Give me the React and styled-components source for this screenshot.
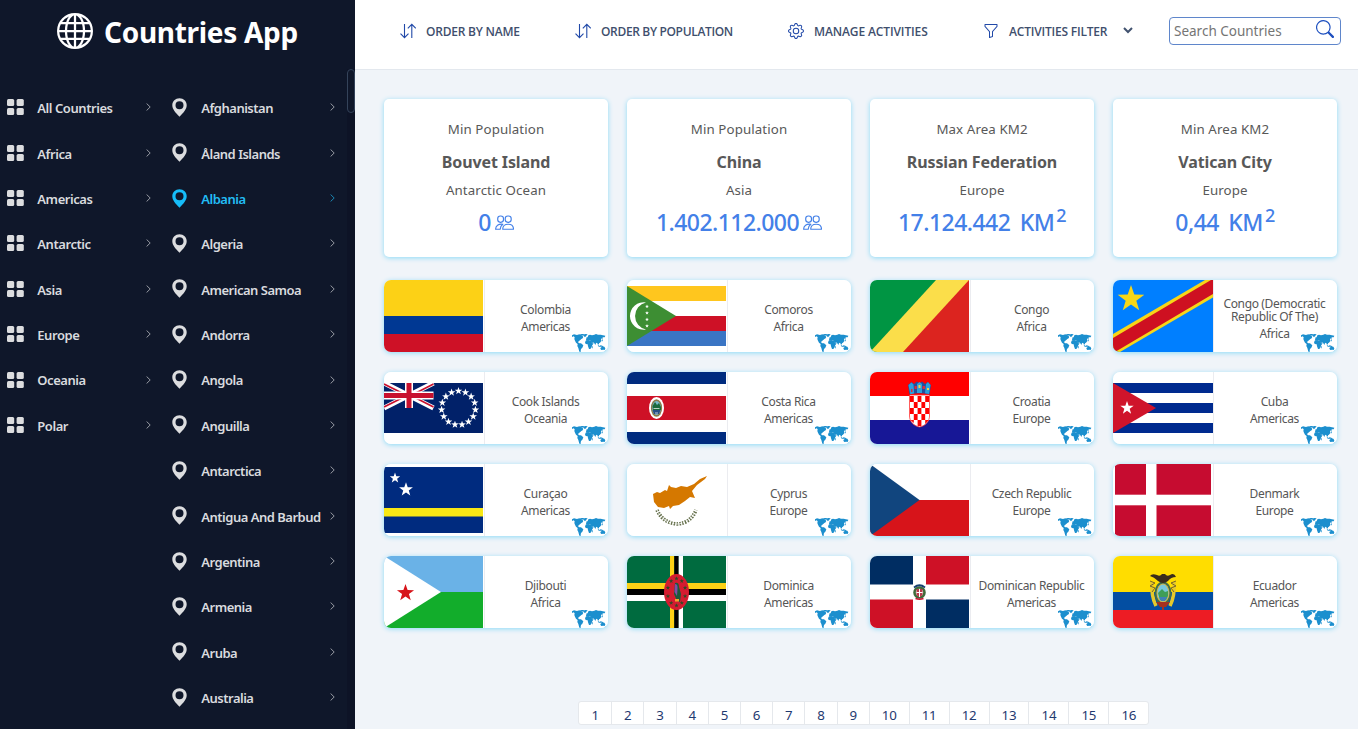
import React from "react";
import styled, { createGlobalStyle } from "styled-components";
import { BsGlobe, BsGear, BsFunnel, BsSearch } from "react-icons/bs";

const GlobalStyle = createGlobalStyle`
  *, *::before, *::after { box-sizing: border-box; }
  body {
    margin: 0;
    overflow: hidden;
    background: #f0f4f9;
    font-family: "Noto Sans", "Open Sans", sans-serif;
  }
  svg { display: block; flex: none; }
`;

const Page = styled.div`
  display: flex;
  width: 100%;
  height: 729px;
  overflow: hidden;
`;

/* ---------- sidebar ---------- */

const Sidebar = styled.aside`
  display: flex;
  flex-direction: column;
  flex: none;
  width: 355px;
  background: #0f172a;
  color: #d9dbdf;
`;

const Brand = styled.div`
  display: flex;
  align-items: center;
  height: 69px;
  padding: 0 0 7px 57px;
  gap: 11px;
  color: #fff;
`;

const BrandName = styled.h1`
  margin: 2px 0 0;
  font-size: 28px;
  line-height: 36px;
  font-weight: 700;
  letter-spacing: -0.3px;
  white-space: nowrap;
`;

const SidebarBody = styled.div`
  display: flex;
  flex: 1;
  min-height: 0;
  overflow: hidden;
`;

const NavList = styled.ul`
  flex: none;
  list-style: none;
  width: ${(p) => p.$width}px;
  margin: 0 ${(p) => p.$after}px 0 0;
  padding: 15.6px 0 0 ${(p) => p.$inset}px;
  letter-spacing: ${(p) => p.$tracking}px;
`;

const NavItem = styled.li`
  display: flex;
  align-items: center;
  height: 45.38px;
  color: ${(p) => (p.$active ? "#22bdf5" : "inherit")};
`;

const NavIcon = styled.span`
  display: flex;
  width: ${(p) => p.$slot}px;
  flex: none;
  color: ${(p) => (p.$active ? "#16bdf9" : "#dcdddf")};
`;

const NavText = styled.span`
  flex: 1;
  padding: 1.8px 0 0 0.3px;
  font-size: 13px;
  line-height: 18px;
  font-weight: 600;
  white-space: nowrap;
`;

const ScrollTrack = styled.div`
  width: 8px;
  background: #0d1326;
`;

const ScrollThumb = styled.div`
  height: 44px;
  border: 1px solid #34435a;
  border-radius: 4px;
  background: #0f172a;
`;

/* ---------- top bar ---------- */

const Main = styled.main`
  flex: 1;
  min-width: 0;
`;

const TopBar = styled.header`
  display: flex;
  align-items: center;
  height: 70px;
  padding: 0 17px 8px 45px;
  background: #fff;
  border-bottom: 1px solid #e3e8ee;
`;

const MenuButton = styled.button`
  display: flex;
  align-items: center;
  flex: none;
  width: ${(p) => p.$width}px;
  gap: 10px;
  padding: 0;
  border: 0;
  background: none;
  color: #2149a8;
`;

const MenuLabel = styled.span`
  padding-top: 2px;
  font-family: "Open Sans", sans-serif;
  font-size: 12px;
  line-height: 18px;
  font-weight: 600;
  letter-spacing: ${(p) => p.$tracking}px;
  white-space: nowrap;
  color: #3f4f6d;
`;

const Caret = styled.span`
  display: flex;
  margin-left: 6px;
  color: #41526f;
`;

const SearchBox = styled.label`
  display: flex;
  align-items: center;
  justify-content: space-between;
  width: 172px;
  height: 28px;
  padding: 0 6px 0 4px;
  border: 1px solid #5f86cb;
  border-radius: 4px;
  background: #fff;
  color: #1d4fbf;
  svg { margin-top: -3px; }
`;

const SearchInput = styled.input`
  width: 130px;
  padding: 0;
  border: 0;
  outline: 0;
  background: none;
  font: 400 13.5px/20px "Noto Sans", sans-serif;
  &::placeholder { color: #757575; opacity: 1; }
`;

/* ---------- content ---------- */

const Content = styled.div`
  padding: 29px 21px 0 29px;
`;

const CardGrid = styled.div`
  display: grid;
  grid-template-columns: repeat(4, 1fr);
  column-gap: 19px;
  row-gap: 20px;
  margin-bottom: ${(p) => p.$after}px;
`;

const StatCard = styled.section`
  display: flex;
  flex-direction: column;
  align-items: center;
  height: 158px;
  padding-top: 18px;
  background: #fff;
  border-radius: 5px;
  box-shadow: 0 1px 5px #8bdaf6;
  color: #585858;
`;

const StatText = styled.p`
  margin: 0;
  font-size: 13.3px;
  line-height: 24px;
  letter-spacing: 0.1px;
`;

const StatName = styled.h2`
  margin: 9px 0 4px;
  font-size: 16px;
  line-height: 24px;
  font-weight: 700;
  letter-spacing: -0.12px;
`;

const StatValue = styled.p`
  display: flex;
  align-items: center;
  margin: 4px 0 0;
  gap: 4px;
  font-size: 23px;
  line-height: 32px;
  font-weight: 500;
  letter-spacing: -0.55px;
  word-spacing: 4px;
  color: #4380e8;
  sup { margin-left: 2px; font-size: 18px; line-height: 0; }
`;

const CountryCard = styled.article`
  position: relative;
  display: flex;
  height: 72px;
  overflow: hidden;
  background: #fff;
  border-radius: 7px;
  color: #565656;
`;

const CardShadow = styled.div`
  border-radius: 7px;
  box-shadow: 0 1px 5px #8bdaf6;
`;

const FlagSlot = styled.div`
  display: flex;
  align-items: center;
  flex: none;
  width: 101px;
  padding-left: ${(p) => (p.$w < 99 ? 2 : 0)}px;
  border-right: 1px solid #ebecf0;
`;

const CountryInfo = styled.div`
  display: flex;
  flex: 1;
  flex-direction: column;
  align-items: center;
  justify-content: center;
  padding: 6px 2px 0 0;
  text-align: center;
`;

const CountryName = styled.h3`
  margin: 0 0 3px;
  max-width: 112px;
  font-size: 12px;
  line-height: 13px;
  font-weight: 400;
  letter-spacing: -0.35px;
  white-space: pre-line;
`;

const CountryRegion = styled.p`
  margin: 0;
  font-size: 12px;
  line-height: 16px;
  letter-spacing: -0.38px;
`;

const MapBadge = styled.span`
  position: absolute;
  right: 2px;
  bottom: 0;
  color: #1c8fce;
`;

const Pagination = styled.nav`
  display: flex;
  width: max-content;
  margin: 0 0 0 194px;
  border: 1px solid #e5e8ec;
  border-radius: 3px;
  background: #fff;
`;

const PageLink = styled.a`
  width: ${(p) => (p.$wide ? 39.95 : 32.2)}px;
  height: 22px;
  padding-top: 3px;
  border-left: ${(p) => (p.$first ? 0 : 1)}px solid #e5e8ec;
  font-size: 13.3px;
  line-height: 20px;
  text-align: center;
  letter-spacing: -0.2px;
  color: #1f3a70;
`;

/* ---------- icons ---------- */

const GridIcon = () => (
  <svg width="17" height="16" viewBox="0 0 17 16" fill="currentColor">
    <rect x="0" y="0" width="7.2" height="7" rx="1.5" />
    <rect x="9.6" y="0" width="7.2" height="7" rx="1.5" />
    <rect x="0" y="9" width="7.2" height="7" rx="1.5" />
    <rect x="9.6" y="9" width="7.2" height="7" rx="1.5" />
  </svg>
);

const PinIcon = () => (
  <svg width="15" height="19" viewBox="0 0 15 19" fill="currentColor" fillRule="evenodd">
    <path d="M7.5 0.3C3.4 0.3.3 3.4.3 7.2c0 4 3.3 7.600 7.200 11.500 3.900-3.900 7.200-7.500 7.200-11.500C14.700 3.400 11.600.3 7.500.3zM7.500 3.300a4 4 0 1 1 0 8 4 4 0 0 1 0-8z" />
  </svg>
);

const ChevronRight = () => (
  <svg width="5" height="8" viewBox="0 0 5 8" fill="none" stroke="currentColor" strokeWidth="0.9" opacity="0.75">
    <path d="M.6.5 4.200 4 .6 7.500" />
  </svg>
);

const SortIcon = () => (
  <svg width="16" height="16" viewBox="0 0 16 16" fill="none" stroke="currentColor" strokeWidth="1.1">
    <path d="M4.500 1v13.600M.5 10.700l4 4 4-4M11.800 15V1.400M7.800 5.300l4-4 4 4" />
  </svg>
);

const CaretIcon = () => (
  <svg width="10" height="7" viewBox="0 0 10 7" fill="none" stroke="currentColor" strokeWidth="2">
    <path d="m1 1 4 4 4-4" />
  </svg>
);

const PeopleIcon = () => (
  <svg width="19" height="15" viewBox="0 0 19 15" fill="none" stroke="currentColor" strokeWidth="1.150">
    <rect x="2.700" y="1" width="5.800" height="6.300" rx="2.700" />
    <rect x="10.200" y="1" width="6" height="6.300" rx="2.700" />
    <path d="M7.700 14.200c0-3.100 2.100-5 5.500-5s5.300 1.900 5.300 5zM7.800 9.200C3.400 8.700.6 10.600.6 14.200h4.600c0-2.200.8-3.700 2.600-5z" strokeLinejoin="round" />
  </svg>
);

const WorldMap = () => (
  <svg width="34" height="18" viewBox="0 0 102 54" fill="currentColor">
    <path d="M0 4 6 1 15 3 22 1 29 4 34 8 32 13 28 15 24 19 20 22 18 25 22 28 27 28 34 34 31 41 27 45 26 50 27 53 22 53 19 42 16 36 17 30 12 26 9 20 7 15 8 10 5 7 0 9z" />
    <path d="M23 1 31 0 37 1 34 5 28 4zM34 2 40 0 47 1 43 5 39 10 36 7z" />
    <path d="M43 13 47 9 49 4 54 2 60 4 67 2 72 0 78 2 86 2 100 5 98 10 92 10 92 15 89 13 87 17 88 21 84 26 81 28 81 32 77 29 74 26 72 28 70 33 67 28 63 25 61 28 58 25 56 20 51 18 46 19 42 18z" />
    <path d="M42 19 49 18 57 20 61 28 65 28 60 35 59 40 55 45 51 45 48 37 47 31 41 30 39 25zM61 37 63 36 62 43 60 43zM76 31 82 36 86 34 91 35 95 38 87 38 80 38zM86 41 92 37 97 38 100 43 98 48 94 47 88 48 85 44zM100 49 102 48 100 53 97 53zM89 19 91 16 93 18 90 23zM44 8 46 10 44 13z" />
  </svg>
);

/* ---------- flags ---------- */

const starPoints = (cx, cy, r, squash = 1) =>
  Array.from({ length: 10 }, (_, i) => {
    const a = (Math.PI / 5) * i - Math.PI / 2;
    const d = i % 2 ? r * 0.4 : r;
    return `${(cx + d * Math.cos(a) * squash).toFixed(2)},${(cy + d * Math.sin(a)).toFixed(2)}`;
  }).join(" ");

const Star = ({ x, y, r, fill = "#fff" }) => <polygon points={starPoints(x, y, r)} fill={fill} />;

const Bar = ({ y, h, fill, x = 0, w = 99 }) => <rect x={x} y={y} width={w} height={h} fill={fill} />;

const FLAGS = {
  colombia: {
    art: <><Bar y={0} h={36} fill="#fcd116" /><Bar y={36} h={18} fill="#003893" /><Bar y={54} h={18} fill="#ce1126" /></>,
  },
  comoros: {
    h: 60,
    art: (
      <>
        <Bar y={0} h={15} fill="#ffc61e" /><Bar y={15} h={15} fill="#fff" />
        <Bar y={30} h={15} fill="#ce1126" /><Bar y={45} h={15} fill="#3a75c4" />
        <path d="M0 0 49 30 0 60z" fill="#3d8e33" />
        <path d="M19 16.500a13.700 13.700 0 1 0 0 27 13.800 13.800 0 0 1 0-27z" fill="#fff" />
        <Star x={20} y={20.500} r={2} /><Star x={20} y={27} r={2} /><Star x={20} y={33.500} r={2} /><Star x={20} y={40} r={2} />
      </>
    ),
  },
  congo: {
    art: <><Bar y={0} h={72} fill="#009543" /><path d="M0 72 66 0H99V72z" fill="#fbde4a" /><path d="M33 72 99 0V72z" fill="#dc241f" /></>,
  },
  drc: {
    w: 100,
    art: (
      <>
        <Bar y={0} h={72} w={100} fill="#007fff" />
        <path d="M0 54 92 0h8v17.500L7 72H0z" fill="#f7d618" />
        <path d="M0 58 98 0h2v14L2 72H0z" fill="#ce1021" />
        <Star x={18} y={19} r={14} fill="#f7d618" />
      </>
    ),
  },
  cook: {
    h: 50,
    art: (
      <>
        <Bar y={0} h={50} fill="#012169" />
        <g>
          <path d="M0 0 49.500 25M49.500 0 0 25" stroke="#fff" strokeWidth="5" />
          <path d="M0 1 25 13.500M49.500 24 25 11.500M0 24 25 11.500M49.500 1 25 13.500" stroke="#c8102e" strokeWidth="1.700" />
          <path d="M25 0V25M0 12.500H49.500" stroke="#fff" strokeWidth="8" />
          <path d="M25 0V25M0 12.500H49.500" stroke="#c8102e" strokeWidth="5" />
        </g>
        {Array.from({ length: 15 }, (_, i) => {
          const a = (i / 15) * Math.PI * 2 - Math.PI / 2;
          return <Star key={i} x={74.500 + 17 * Math.cos(a)} y={25 + 17 * Math.sin(a)} r={4} />;
        })}
      </>
    ),
  },
  costarica: {
    art: (
      <>
        <Bar y={0} h={72} fill="#002b7f" /><Bar y={12} h={48} fill="#fff" /><Bar y={24} h={24} fill="#ce1126" />
        <ellipse cx="29.500" cy="36" rx="7.500" ry="11" fill="#fff" />
        <ellipse cx="29.500" cy="36" rx="5.600" ry="8.800" fill="#8a7a48" />
        <ellipse cx="29.500" cy="36" rx="4.300" ry="7" fill="#76b7c8" />
        <path d="M25.500 34 28 30l2 3 2-2 2 4v3h-8z" fill="#1b6a3b" />
        <path d="M25.500 38h8l-1.500 4h-5z" fill="#264d86" />
        <path d="M26.500 36.500h6M28 41h3" stroke="#fff" strokeWidth="0.7" />
      </>
    ),
  },
  croatia: {
    art: (
      <>
        <Bar y={0} h={24} fill="#ff0000" /><Bar y={24} h={24} fill="#fff" /><Bar y={48} h={24} fill="#171796" />
        <path d="M39.500 23h20v21c0 5-4 10-10 11-6-1-10-6-10-11z" fill="#fff" stroke="#f33" strokeWidth="0.8" />
        <path d="M40 24h3.800v6H40zM47.600 24h3.800v6h-3.800zM55.200 24H59v6h-3.800zM43.800 30h3.800v6h-3.800zM51.400 30h3.800v6h-3.800zM40 36h3.800v6H40zM47.600 36h3.800v6h-3.800zM55.200 36H59v6h-3.800zM43.800 42h3.800v6h-3.800zM51.400 42h3.800v6h-3.800zM47.600 48h3.800v6h-3.800zM40.500 48h3.300v3zM55.200 48h3.500l-3.500 4z" fill="#f00" />
        <path d="m38 13 3.500-3 2.500 2 3-2.500 2.500 2 2.500-2 3 2.500 2.500-2 3.500 3-1.500 9.500q-10-2.500-20 0z" fill="#214f9d" />
        <path d="m38.500 13 3-2.500 2 2 .7 9-4 .7zM47 12l2.500-2 2.500 2v9h-5zM56 12l2-2 2.500 3-1.500 9-4-.7z" fill="#2c9fdb" />
        <path d="M44.500 14h2.300v3h-2.300zM52.500 14H55v3h-2.500zM41 17h1.500v3H41z" fill="#d92b3f" />
        <path d="M48.500 13h2v3h-2zM57 16h2v2h-2z" fill="#f4d34a" />
      </>
    ),
  },
  cuba: {
    h: 50,
    w: 100,
    art: (
      <>
        <Bar y={0} h={50} w={100} fill="#002a8f" /><Bar y={10} h={10} w={100} fill="#fff" /><Bar y={30} h={10} w={100} fill="#fff" />
        <path d="M0 0 43 25 0 50z" fill="#cf142b" /><Star x={14} y={25} r={7} />
      </>
    ),
  },
  curacao: {
    h: 66,
    art: (
      <>
        <Bar y={0} h={66} fill="#002b7f" /><Bar y={41} h={8.500} fill="#f9e814" />
        <Star x={11} y={11} r={5.500} /><Star x={22} y={22.500} r={7.300} />
      </>
    ),
  },
  cyprus: {
    art: (
      <>
        <path d="M26 30 30 28 33 29 38 26 40 27 42 21 44 23 49 24 54 22 60 23 67 20 73 15 80 12 78 15 70 21 65 27 68 34 63 33 58 37 52 41 46 42 43 45 42 42 37 44 31 43 27 38z" fill="#d57800" />
        <path d="M30 46q6 13 20 14q14-1 19-14" fill="none" stroke="#66714d" strokeWidth="3.600" strokeDasharray="1.600 1.200" />
        <path d="M30 46q6 13 20 14q14-1 19-14" fill="none" stroke="#fff" strokeWidth="1" strokeDasharray="2 1.500" />
      </>
    ),
  },
  czech: {
    art: <><Bar y={0} h={36} fill="#fff" /><Bar y={36} h={36} fill="#d7141a" /><path d="M0 0 49.500 36 0 72z" fill="#11457e" /></>,
  },
  denmark: {
    w: 96,
    art: <><Bar y={0} h={72} w={96} fill="#c60c30" /><Bar y={0} h={72} x={31} w={10.500} fill="#fff" /><Bar y={30.700} h={10.600} w={96} fill="#fff" /></>,
  },
  djibouti: {
    art: <><Bar y={0} h={36} fill="#6ab2e7" /><Bar y={36} h={36} fill="#12ad2b" /><path d="M0 0 57 36 0 72z" fill="#fff" /><Star x={21.500} y={37} r={9} fill="#d7141a" /></>,
  },
  dominica: {
    art: (
      <>
        <Bar y={0} h={72} fill="#006b3f" />
        <Bar y={27} h={6} fill="#fcd116" /><Bar y={33} h={6} fill="#000" /><Bar y={39} h={6} fill="#fff" />
        <Bar x={43} w={4.300} y={0} h={72} fill="#fcd116" /><Bar x={47.300} w={4.400} y={0} h={72} fill="#000" /><Bar x={51.700} w={4.300} y={0} h={72} fill="#fff" />
        <ellipse cx="49.500" cy="36" rx="12.500" ry="18" fill="#d41c30" />
        {Array.from({ length: 10 }, (_, i) => {
          const a = (i / 10) * Math.PI * 2 - Math.PI / 2;
          return <Star key={i} x={49.500 + 9 * Math.cos(a)} y={36 + 13.500 * Math.sin(a)} r={2.300} fill="#2d4a25" />;
        })}
        <path d="M48 27q4-1 4 4l2 7-1 8-3-1-3-7z" fill="#1c5a3a" />
        <path d="M48 28q3 0 2.500 5L50 40l-2.500-4z" fill="#7c50a8" />
        <path d="M48 43h4v2.500h-4z" fill="#f2a52c" />
      </>
    ),
  },
  dominican: {
    art: (
      <>
        <Bar y={0} h={72} fill="#fff" />
        <Bar y={0} h={28.500} w={43} fill="#002d62" /><Bar y={0} h={28.500} x={56} w={43} fill="#ce1126" />
        <Bar y={43.500} h={28.500} w={43} fill="#ce1126" /><Bar y={43.500} h={28.500} x={56} w={43} fill="#002d62" />
        <ellipse cx="49.500" cy="36.500" rx="5" ry="5" fill="#e8e4dc" stroke="#3f6b3a" strokeWidth="2.600" />
        <path d="M44 31.500q5.500-4.500 11 0" fill="none" stroke="#16406f" strokeWidth="1.800" />
        <path d="M45.500 42.500q4 1.500 8 0" fill="none" stroke="#c8102e" strokeWidth="1.500" />
        <path d="M46.500 33h6v6l-3 2.500-3-2.500z" fill="#b73a4b" /><path d="M49 33h1v8h-1zM46.500 36h6v1h-6z" fill="#fff" />
      </>
    ),
  },
  ecuador: {
    w: 100,
    art: (
      <>
        <Bar y={0} h={36} w={100} fill="#ffdd00" /><Bar y={36} h={18} w={100} fill="#034ea2" /><Bar y={54} h={18} w={100} fill="#ed1c24" />
        <path d="M39 26q-1 14 4 24M61 26q1 14-4 24" fill="none" stroke="#e6c92b" strokeWidth="3.500" />
        <path d="M37 25l5 2-5 3 5 2-3 4M63 25l-5 2 5 3-5 2 3 4" fill="none" stroke="#76632d" />
        <ellipse cx="50" cy="37" rx="8.500" ry="11.500" fill="#3f6d4d" />
        <ellipse cx="50" cy="37" rx="6.500" ry="9.500" fill="#d2b54a" />
        <ellipse cx="50" cy="37" rx="5.500" ry="8.500" fill="#79c8dc" />
        <path d="M45 37l4-4 3 3 3-1v5l-2 4h-6z" fill="#3e9e57" />
        <path d="M46 41h8l-2 4h-4z" fill="#3f80b5" />
        <path d="M37 20q2-3 7-1 3 2 5-1h3q2 3 5 1 4-3 6 2-5 0-8 4-5 4-10 0-4-4-8-5z" fill="#3b2c1c" />
        <path d="M43 46h14l-4 5h-6zM49 50h2v4h-2z" fill="#a5311f" />
      </>
    ),
  },
};

const Flag = ({ id }) => {
  const { art, w = 99, h = 72 } = FLAGS[id];
  return (
    <FlagSlot $w={w}>
      <svg width={w} height={h} viewBox={`0 0 ${w} ${h}`}>{art}</svg>
    </FlagSlot>
  );
};

/* ---------- data ---------- */

const REGIONS = ["All Countries", "Africa", "Americas", "Antarctic", "Asia", "Europe", "Oceania", "Polar"];

const COUNTRIES = [
  "Afghanistan", "Åland Islands", "Albania", "Algeria", "American Samoa", "Andorra", "Angola",
  "Anguilla", "Antarctica", "Antigua And Barbud", "Argentina", "Armenia", "Aruba", "Australia",
];

const STATS = [
  { label: "Min Population", name: "Bouvet Island", region: "Antarctic Ocean", value: "0", people: true },
  { label: "Min Population", name: "China", region: "Asia", value: "1.402.112.000", people: true },
  { label: "Max Area KM2", name: "Russian Federation", region: "Europe", value: "17.124.442" },
  { label: "Min Area KM2", name: "Vatican City", region: "Europe", value: "0,44" },
];

const CARDS = [
  ["colombia", "Colombia", "Americas"],
  ["comoros", "Comoros", "Africa"],
  ["congo", "Congo", "Africa"],
  ["drc", "Congo (Democratic\nRepublic Of The)", "Africa"],
  ["cook", "Cook Islands", "Oceania"],
  ["costarica", "Costa Rica", "Americas"],
  ["croatia", "Croatia", "Europe"],
  ["cuba", "Cuba", "Americas"],
  ["curacao", "Curaçao", "Americas"],
  ["cyprus", "Cyprus", "Europe"],
  ["czech", "Czech Republic", "Europe"],
  ["denmark", "Denmark", "Europe"],
  ["djibouti", "Djibouti", "Africa"],
  ["dominica", "Dominica", "Americas"],
  ["dominican", "Dominican Republic", "Americas"],
  ["ecuador", "Ecuador", "Americas"],
];

export default function App() {
  return (
    <Page>
      <GlobalStyle />
      <Sidebar>
        <Brand>
          <BsGlobe size={36} />
          <BrandName>Countries App</BrandName>
        </Brand>
        <SidebarBody>
          <NavList $width={151} $after={20} $inset={7} $tracking={-0.44}>
            {REGIONS.map((r) => (
              <NavItem key={r}>
                <NavIcon $slot={30}><GridIcon /></NavIcon>
                <NavText>{r}</NavText>
                <ChevronRight />
              </NavItem>
            ))}
          </NavList>
          <NavList $width={164} $after={12} $inset={1} $tracking={-0.5}>
            {COUNTRIES.map((c) => (
              <NavItem key={c} $active={c === "Albania"}>
                <NavIcon $slot={29} $active={c === "Albania"}><PinIcon /></NavIcon>
                <NavText>{c}</NavText>
                <ChevronRight />
              </NavItem>
            ))}
          </NavList>
          <ScrollTrack><ScrollThumb /></ScrollTrack>
        </SidebarBody>
      </Sidebar>
      <Main>
        <TopBar>
          <MenuButton $width={175}><SortIcon /><MenuLabel $tracking={-0.22}>ORDER BY NAME</MenuLabel></MenuButton>
          <MenuButton $width={213}><SortIcon /><MenuLabel $tracking={-0.34}>ORDER BY POPULATION</MenuLabel></MenuButton>
          <MenuButton $width={195}><BsGear size={16} /><MenuLabel $tracking={-0.12}>MANAGE ACTIVITIES</MenuLabel></MenuButton>
          <MenuButton $width={186}>
            <BsFunnel size={16} />
            <MenuLabel $tracking={-0.2}>ACTIVITIES FILTER</MenuLabel>
            <Caret><CaretIcon /></Caret>
          </MenuButton>
          <SearchBox>
            <SearchInput placeholder="Search Countries" />
            <BsSearch size={18} />
          </SearchBox>
        </TopBar>
        <Content>
          <CardGrid $after={23}>
            {STATS.map((s) => (
              <StatCard key={s.name}>
                <StatText>{s.label}</StatText>
                <StatName>{s.name}</StatName>
                <StatText>{s.region}</StatText>
                <StatValue>
                  {s.people ? <><span>{s.value}</span><PeopleIcon /></> : <span>{s.value} KM<sup>2</sup></span>}
                </StatValue>
              </StatCard>
            ))}
          </CardGrid>
          <CardGrid $after={73}>
            {CARDS.map(([id, name, region]) => (
              <CardShadow key={id}>
                <CountryCard>
                  <Flag id={id} />
                  <CountryInfo>
                    <CountryName>{name}</CountryName>
                    <CountryRegion>{region}</CountryRegion>
                  </CountryInfo>
                  <MapBadge><WorldMap /></MapBadge>
                </CountryCard>
              </CardShadow>
            ))}
          </CardGrid>
          <Pagination>
            {Array.from({ length: 16 }, (_, i) => (
              <PageLink key={i} $wide={i > 8} $first={i === 0}>{i + 1}</PageLink>
            ))}
          </Pagination>
        </Content>
      </Main>
    </Page>
  );
}
